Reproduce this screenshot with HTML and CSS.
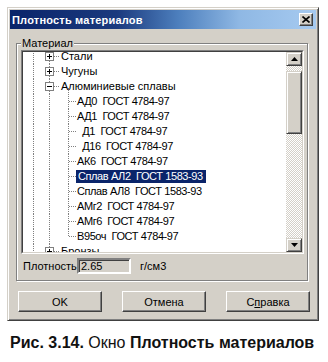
FILE: index.html
```html
<!DOCTYPE html>
<html lang="ru">
<head>
    <meta charset="UTF-8">
    <meta name="viewport" content="width=device-width, initial-scale=1.0">
    <title>Плотность материалов</title>
    <link rel="stylesheet" href="styles.css">
</head>
<body>
    <div class="window">
        <div class="titlebar">
            <span class="title">Плотность материалов</span>
            <span class="close">
                <svg width="8" height="7" viewBox="0 0 8 7"><path d="M0.5 0.5 L7.5 6.5 M7.5 0.5 L0.5 6.5" stroke="#000" stroke-width="1.6"/></svg>
            </span>
        </div>

        <fieldset class="group">
            <legend>Материал</legend>
            <div class="tree">
                <div class="tree-view">
                    <ul class="nodes">
                        <li class="node top">
                            <svg class="box" width="9" height="9" viewBox="0 0 9 9"><rect x="0.5" y="0.5" width="8" height="8" fill="#fff" stroke="#808080"/><path d="M2 4.5 H7 M4.5 2 V7" stroke="#000"/></svg>
                            <span class="hline"></span><span class="label">Стали</span>
                        </li>
                        <li class="node top">
                            <svg class="box" width="9" height="9" viewBox="0 0 9 9"><rect x="0.5" y="0.5" width="8" height="8" fill="#fff" stroke="#808080"/><path d="M2 4.5 H7 M4.5 2 V7" stroke="#000"/></svg>
                            <span class="hline"></span><span class="label">Чугуны</span>
                        </li>
                        <li class="node top open">
                            <svg class="box" width="9" height="9" viewBox="0 0 9 9"><rect x="0.5" y="0.5" width="8" height="8" fill="#fff" stroke="#808080"/><path d="M2 4.5 H7" stroke="#000"/></svg>
                            <span class="hline"></span><span class="label">Алюминиевые сплавы</span>
                        </li>
                        <li class="node child"><span class="hline"></span><span class="label">АД0  ГОСТ 4784-97</span></li>
                        <li class="node child"><span class="hline"></span><span class="label">АД1  ГОСТ 4784-97</span></li>
                        <li class="node child"><span class="hline"></span><span class="label">  Д1  ГОСТ 4784-97</span></li>
                        <li class="node child"><span class="hline"></span><span class="label">  Д16  ГОСТ 4784-97</span></li>
                        <li class="node child"><span class="hline"></span><span class="label">АК6  ГОСТ 4784-97</span></li>
                        <li class="node child"><span class="hline"></span><span class="label selected">Сплав АЛ2  ГОСТ 1583-93</span></li>
                        <li class="node child"><span class="hline"></span><span class="label">Сплав АЛ8  ГОСТ 1583-93</span></li>
                        <li class="node child"><span class="hline"></span><span class="label">АМг2  ГОСТ 4784-97</span></li>
                        <li class="node child"><span class="hline"></span><span class="label">АМг6  ГОСТ 4784-97</span></li>
                        <li class="node child last"><span class="hline"></span><span class="label">В95оч  ГОСТ 4784-97</span></li>
                        <li class="node top">
                            <svg class="box" width="9" height="9" viewBox="0 0 9 9"><rect x="0.5" y="0.5" width="8" height="8" fill="#fff" stroke="#808080"/><path d="M2 4.5 H7 M4.5 2 V7" stroke="#000"/></svg>
                            <span class="hline"></span><span class="label">Бронзы</span>
                        </li>
                    </ul>
                    <div class="scrollbar">
                        <span class="sb-btn">
                            <svg width="7" height="4" viewBox="0 0 7 4"><path d="M3.5 0 L7 4 H0 Z" fill="#000"/></svg>
                        </span>
                        <span class="sb-thumb"></span>
                        <span class="sb-btn down">
                            <svg width="7" height="4" viewBox="0 0 7 4"><path d="M0 0 H7 L3.5 4 Z" fill="#000"/></svg>
                        </span>
                    </div>
                </div>
            </div>

            <div class="density">
                <span class="density-label">Плотность</span>
                <span class="field">2.65</span>
                <span class="unit">г/см3</span>
            </div>
        </fieldset>

        <div class="buttons">
            <button type="button" class="button">OK</button>
            <button type="button" class="button">Отмена</button>
            <button type="button" class="button">С<u>п</u>равка</button>
        </div>
    </div>

    <p class="caption"><b>Рис. 3.14.</b> Окно <b>Плотность материалов</b></p>
</body>
</html>
```

FILE: styles.css
```css
body {
    margin: 0;
    background: #fff;
    color: #000;
    font-family: 'Liberation Sans', Arial, sans-serif;
    font-size: 11px;
}
.window {
    margin: 7px 0 0 7px;
    width: 312px;
    box-sizing: border-box;
    padding: 2px 2px 8px;
    background: #d4d0c8;
    border: 1px solid;
    border-color: #d4d0c8 #404040 #404040 #d4d0c8;
    box-shadow: inset 1px 1px #fff, inset -1px -1px #808080;
}
.titlebar {
    height: 19px;
    display: flex;
    align-items: center;
    justify-content: space-between;
    padding: 0 3px 0 2px;
    background: linear-gradient(90deg, #0a246a 0%, #1b3a7e 35%, #4d7fbd 55%, #8fb8e4 75%, #a6caf0 100%);
}
.title {
    color: #fff;
    font-weight: bold;
    letter-spacing: 0.2px;
}
.close {
    width: 14px;
    height: 13px;
    box-sizing: border-box;
    display: flex;
    align-items: center;
    justify-content: center;
    background: #d4d0c8;
    border: 1px solid;
    border-color: #fff #404040 #404040 #fff;
    box-shadow: inset -1px -1px #808080;
}
.group {
    margin: 8px 8px 0 6px;
    padding: 0 2px 6px 4px;
    min-width: 0;
    border: 1px solid #808080;
    box-shadow: inset 1px 1px #fff, 1px 1px #fff;
}
.group legend {
    padding: 0 1px;
    line-height: 13px;
    background: #d4d0c8;
}
.tree {
    width: 283px;
    box-sizing: border-box;
    border: 1px solid;
    border-color: #808080 #fff #fff #808080;
}
.tree-view {
    height: 202px;
    box-sizing: border-box;
    display: flex;
    overflow: hidden;
    border: 1px solid;
    border-color: #404040 #d4d0c8 #d4d0c8 #404040;
}
.nodes {
    flex: 1;
    margin: -3px 0 0;
    padding: 0;
    list-style: none;
    background: #fff;
}
.node {
    height: 15px;
    display: flex;
    align-items: center;
    white-space: pre;
    background-image:
        repeating-linear-gradient(#808080 0 1px, transparent 1px 2px),
        repeating-linear-gradient(#808080 0 1px, transparent 1px 2px);
    background-position: 10px 0, 26px 0;
    background-size: 1px 100%;
    background-repeat: no-repeat;
}
.node.top {
    padding-left: 22px;
}
.node.top .hline {
    width: 6px;
}
.node.open {
    background-image:
        repeating-linear-gradient(#808080 0 1px, transparent 1px 2px),
        repeating-linear-gradient(#808080 0 1px, transparent 1px 2px),
        repeating-linear-gradient(#808080 0 1px, transparent 1px 2px);
    background-position: 10px 0, 26px 0, 45px 100%;
    background-size: 1px 100%, 1px 100%, 1px 6px;
}
.node.child {
    padding-left: 46px;
    background-image:
        repeating-linear-gradient(#808080 0 1px, transparent 1px 2px),
        repeating-linear-gradient(#808080 0 1px, transparent 1px 2px),
        repeating-linear-gradient(#808080 0 1px, transparent 1px 2px);
    background-position: 10px 0, 26px 0, 45px 0;
    background-size: 1px 100%, 1px 100%, 1px 100%;
}
.node.child .label {
    letter-spacing: -0.4px;
}
.node.last {
    background-size: 1px 100%, 1px 100%, 1px 8px;
}
.box {
    display: block;
    flex: none;
}
.hline {
    width: 7px;
    height: 1px;
    flex: none;
    background: repeating-linear-gradient(90deg, #808080 0 1px, transparent 1px 2px);
}
.label {
    padding: 0 1px;
    line-height: 13px;
}
.label.selected {
    padding: 0 3px 0 2px;
    background: #0a246a;
    color: #fff;
}
.scrollbar {
    width: 16px;
    display: flex;
    flex-direction: column;
    background-color: #fff;
    background-image: repeating-conic-gradient(#d4d0c8 0 25%, #fff 0 50%);
    background-size: 2px 2px;
}
.sb-btn, .sb-thumb {
    box-sizing: border-box;
    background: #d4d0c8;
    border: 1px solid;
    border-color: #d4d0c8 #404040 #404040 #d4d0c8;
    box-shadow: inset 1px 1px #fff, inset -1px -1px #808080;
}
.sb-btn {
    height: 14px;
    display: flex;
    align-items: center;
    justify-content: center;
}
.sb-btn.down {
    margin-top: auto;
}
.sb-thumb {
    height: 63px;
    margin-top: 5px;
}
.density {
    margin-top: 4px;
    height: 16px;
    display: flex;
    align-items: center;
}
.density-label {
    padding-left: 2px;
    width: 54px;
}
.field {
    width: 54px;
    height: 16px;
    box-sizing: border-box;
    padding-left: 2px;
    line-height: 12px;
    border: 2px solid;
    border-color: #808080 #fff #fff #808080;
    box-shadow: inset 1px 1px #404040;
}
.unit {
    margin-left: 9px;
}
.buttons {
    display: flex;
    justify-content: space-between;
    margin-top: 10px;
    padding: 0 6px 0 8px;
}
.button {
    width: 84px;
    height: 21px;
    padding: 0;
    font-family: inherit;
    font-size: 11px;
    color: #000;
    background: #d4d0c8;
    border: 1px solid;
    border-color: #fff #404040 #404040 #fff;
    box-shadow: inset -1px -1px #808080;
}
.caption {
    margin: 13px 0 0 10px;
    font-size: 16px;
    line-height: 18px;
    color: #111;
}
```
